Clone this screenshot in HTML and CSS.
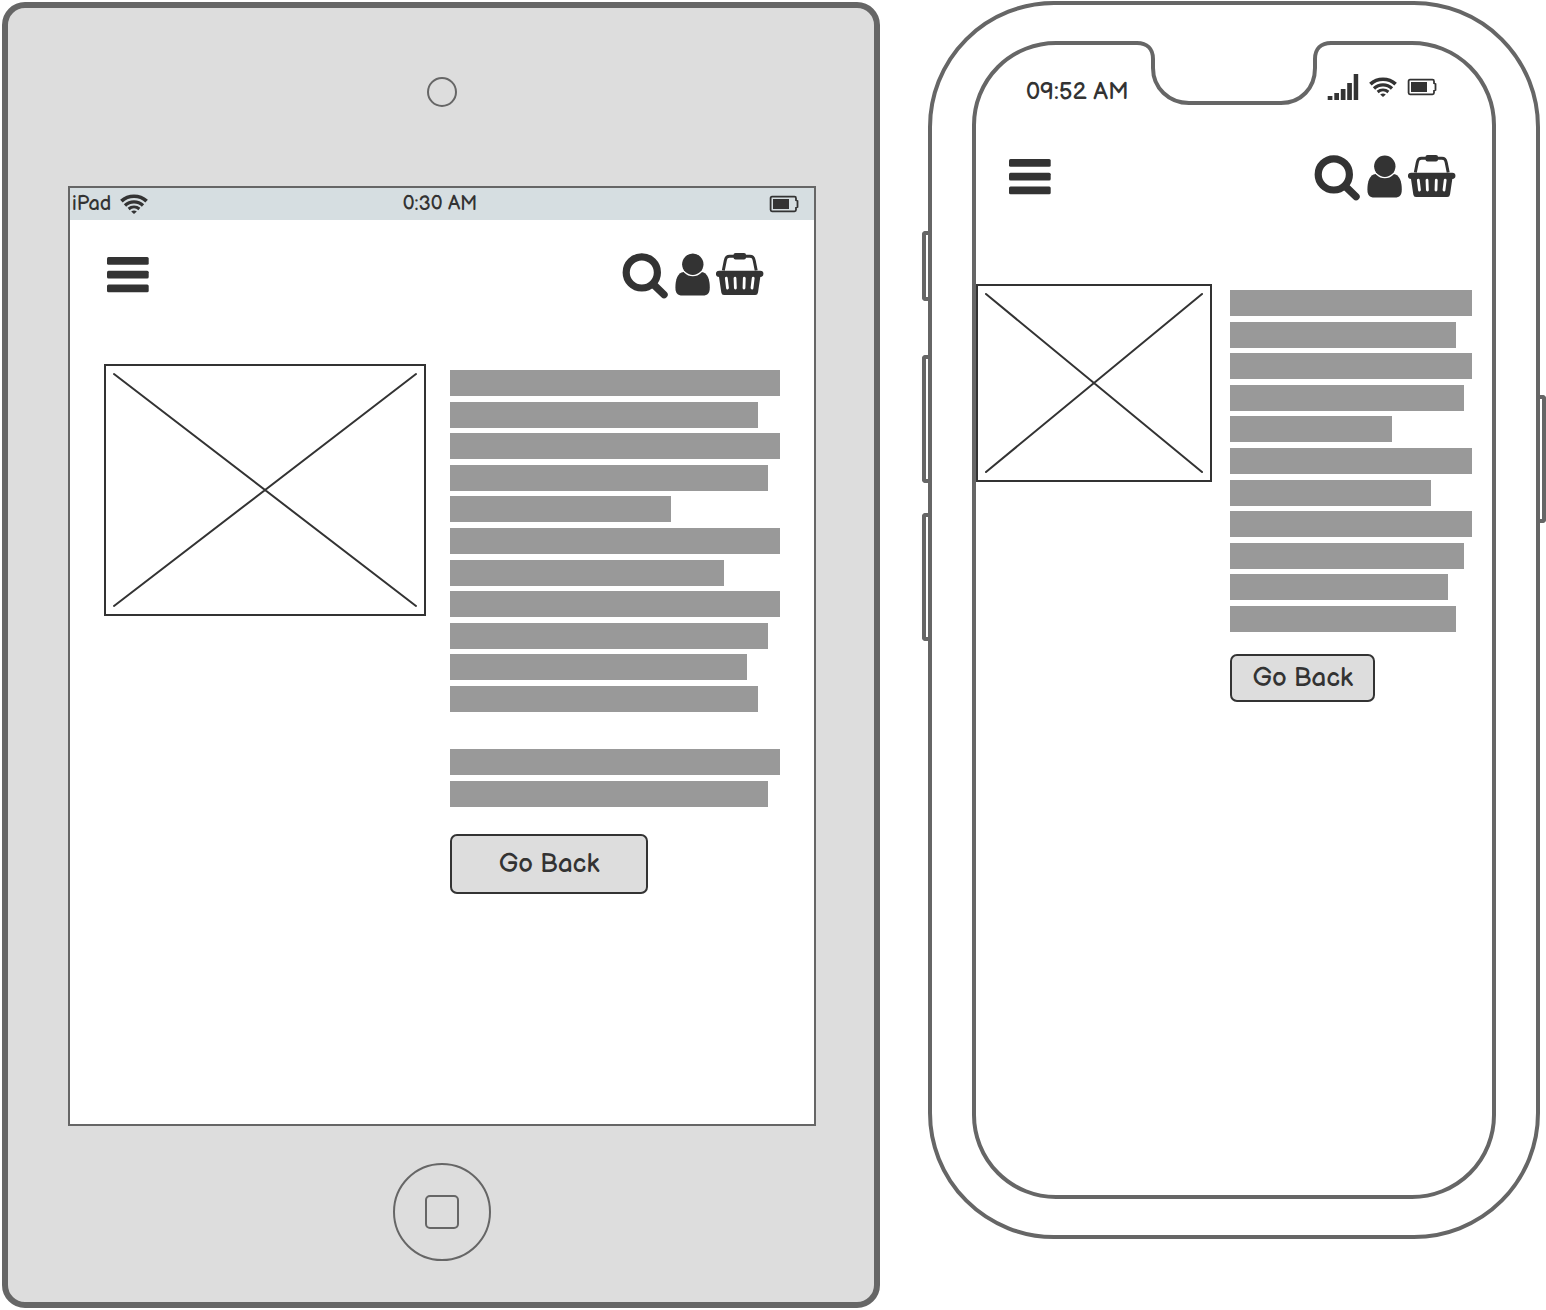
FILE: index.html
```html
<!DOCTYPE html>
<html lang="en">
<head>
<meta charset="utf-8">
<meta name="viewport" content="width=device-width, initial-scale=1">
<title>Product page wireframes</title>
<link rel="stylesheet" href="styles.css">
</head>
<body>
<svg class="sprite" aria-hidden="true">
  <symbol id="menu" viewBox="0 0 42 36">
    <rect y="0" width="41.700" height="7.700" rx="1.500"/><rect y="13.800" width="41.700" height="7.700" rx="1.500"/><rect y="27.500" width="41.700" height="7.700" rx="1.500"/>
  </symbol>
  <symbol id="search" viewBox="0 0 46 47">
    <circle cx="19.8" cy="20.400" r="15.600" fill="none" stroke="currentColor" stroke-width="7.200"/>
    <path d="M31 32 42 42.700" fill="none" stroke="currentColor" stroke-width="7.400" stroke-linecap="round"/>
  </symbol>
  <symbol id="user" viewBox="0 0 36 44">
    <path d="M9.600 20.100C3.600 20.700 1.400 27.900 1.400 35.600c0 5.500 2 8 7 8h20.400c5 0 7-2.500 7-8 0-7.700-2.200-14.900-8.200-15.500z"/>
    <circle cx="18.800" cy="12.200" r="12" fill="#fff"/>
    <circle cx="18.800" cy="12.200" r="10.700"/>
  </symbol>
  <symbol id="basket" viewBox="0 0 48 44">
    <path d="M7.300 18.500 9.300 8.500C10 5 11 4.300 13.500 4.300H34C36.500 4.300 37.500 5 38.200 8.500L40.200 18.500" fill="none" stroke="currentColor" stroke-width="3"/>
    <rect x="17.500" y="1" width="12.500" height="6.500" rx="2"/>
    <path d="M3 18.700H44.300a3 3 0 0 1 0 6.300L42 40.500Q41.600 43 39.300 43H8Q5.700 43 5.300 40.500L3 25a3 3 0 0 1 0-6.300z"/>
    <path d="M10.300 26.200 11.500 36M19 26.200 19.400 36M28.300 26.200 28 36M37.200 26.200 36 36" fill="none" stroke="#fff" stroke-width="2.800" stroke-linecap="round"/>
  </symbol>
  <symbol id="wifi" viewBox="0 0 28 20">
    <g fill="none" stroke="currentColor" stroke-width="3.700">
      <path d="M1.400 7.200A18.500 18.500 0 0 1 26.600 7.200"/>
      <path d="M5 11.500A13 13 0 0 1 23 11.500" stroke-width="3.300"/>
      <path d="M8.600 15A8.500 8.500 0 0 1 19.400 15" stroke-width="3"/>
    </g>
    <path d="M11.200 17.500Q14 15.500 16.800 17.500L14 20z"/>
  </symbol>
  <symbol id="battery" viewBox="0 0 30 18">
    <path d="M3 1.700H25.500Q27 1.700 27 3.200V5.300L28.500 6V12L27 12.700V14.800Q27 16.300 25.500 16.300H3Q1.600 16.300 1.600 14.800V3.200Q1.600 1.700 3 1.700z" fill="none" stroke="currentColor" stroke-width="1.800"/>
    <rect x="4" y="4" width="16" height="10"/>
  </symbol>
  <symbol id="signal" viewBox="0 0 32 26">
    <path d="M.7 22h4.700v4H.7zM7.300 19H12v7H7.300zM13.800 15h4.700v11h-4.700zM20.200 9h4.700v17h-4.700zM26.700 0h4.500v26h-4.500z"/>
  </symbol>
</svg>

<div class="board">
  <section class="tablet" aria-label="Tablet">
    <div class="camera"></div>
    <div class="screen tablet-screen">
      <div class="tablet-status">
        <span class="carrier">iPad <svg class="icon-wifi"><use href="#wifi"/></svg></span>
        <span>0:30 AM</span>
        <svg class="icon-battery"><use href="#battery"/></svg>
      </div>
      <header class="toolbar">
        <button class="icon-button" aria-label="Menu"><svg class="icon-menu"><use href="#menu"/></svg></button>
        <nav class="actions">
          <button class="icon-button" aria-label="Search"><svg class="icon-search"><use href="#search"/></svg></button>
          <button class="icon-button" aria-label="Account"><svg class="icon-user"><use href="#user"/></svg></button>
          <button class="icon-button" aria-label="Basket"><svg class="icon-basket"><use href="#basket"/></svg></button>
        </nav>
      </header>
      <main class="product">
        <div class="picture"><svg viewBox="0 0 100 100" preserveAspectRatio="none"><path d="M0 0 100 100M100 0 0 100"/></svg></div>
        <div class="details">
          <div class="copy copy-long">
            <i class="line"></i><i class="line w93"></i><i class="line"></i><i class="line w96"></i><i class="line w67"></i><i class="line"></i><i class="line w83"></i><i class="line"></i><i class="line w96"></i><i class="line w90"></i><i class="line w93"></i><i class="line blank"></i><i class="line"></i><i class="line w96"></i>
          </div>
          <button class="back">Go Back</button>
        </div>
      </main>
    </div>
    <div class="home"><div class="home-mark"></div></div>
  </section>

  <section class="phone" aria-label="Phone">
    <div class="rail rail-left"><i class="key key-short"></i><i class="key key-first"></i><i class="key"></i></div>
    <div class="phone-frame">
      <div class="screen phone-screen">
        <svg class="notch" viewBox="0 0 200 66">
          <path d="M2 0H198V4H181V27C181 47 167 62 147 62H55C33 62 19 47 19 27V4H2z" fill="#fff"/>
          <path d="M0 2H3C13 2 19 8 19 18V27C19 47 35 62 55 62H147C167 62 181 47 181 27V18C181 8 187 2 197 2H200" fill="none" stroke="#666" stroke-width="4"/>
        </svg>
        <div class="phone-status">
          <span class="clock">09:52 AM</span>
          <span class="indicators">
            <svg class="icon-signal"><use href="#signal"/></svg>
            <svg class="icon-wifi"><use href="#wifi"/></svg>
            <svg class="icon-battery"><use href="#battery"/></svg>
          </span>
        </div>
        <header class="toolbar">
          <button class="icon-button" aria-label="Menu"><svg class="icon-menu"><use href="#menu"/></svg></button>
          <nav class="actions">
            <button class="icon-button" aria-label="Search"><svg class="icon-search"><use href="#search"/></svg></button>
            <button class="icon-button" aria-label="Account"><svg class="icon-user"><use href="#user"/></svg></button>
            <button class="icon-button" aria-label="Basket"><svg class="icon-basket"><use href="#basket"/></svg></button>
          </nav>
        </header>
        <main class="product">
          <div class="picture"><svg viewBox="0 0 100 100" preserveAspectRatio="none"><path d="M0 0 100 100M100 0 0 100"/></svg></div>
          <div class="details">
            <div class="copy">
              <i class="line"></i><i class="line w93"></i><i class="line"></i><i class="line w96"></i><i class="line w67"></i><i class="line"></i><i class="line w83"></i><i class="line"></i><i class="line w96"></i><i class="line w90"></i><i class="line w93"></i>
            </div>
            <button class="back">Go Back</button>
          </div>
        </main>
      </div>
    </div>
    <div class="rail rail-right"><i class="key"></i></div>
  </section>
</div>
</body>
</html>
```
FILE: styles.css
```css
* { box-sizing: border-box; }

body {
  margin: 0;
  background: #fff;
  color: #333;
  font-family: "Balsamiq Sans", Lato, sans-serif;
}

svg { display: block; flex: none; fill: currentColor; }
.sprite { position: absolute; width: 0; height: 0; }

.board {
  display: grid;
  grid-template-columns: minmax(0, 878fr) minmax(0, 624fr);
  align-items: start;
  gap: 42px;
  padding: 1px 0 2px 2px;
}

.screen {
  display: flex;
  flex-direction: column;
  flex: 1;
  align-self: stretch;
  background: #fff;
}

/* Tablet */
.tablet {
  aspect-ratio: 878 / 1306;
  margin-top: 1px;
  padding: 69px 58px 41px 60px;
  display: flex;
  flex-direction: column;
  align-items: center;
  border: 6px solid #666;
  border-radius: 23px;
  background: #ddd;
}

.camera {
  width: 30px;
  height: 30px;
  margin-bottom: 79px;
  border: 2px solid #666;
  border-radius: 50%;
}

.tablet-screen { border: 2px solid #666; }

.home {
  display: grid;
  place-items: center;
  width: 98px;
  height: 98px;
  margin-top: 37px;
  border: 2px solid #666;
  border-radius: 50%;
}

.home-mark {
  width: 34px;
  height: 34px;
  border: 2px solid #666;
  border-radius: 5px;
}

.tablet-status {
  display: grid;
  grid-template-columns: 1fr auto 1fr;
  align-items: center;
  height: 32px;
  padding: 0 6px 0 2px;
  background: #d6dee1;
  font-size: 20px;
  line-height: 28px;
}

.tablet-status .icon-battery { justify-self: end; margin-right: 9px; }
.carrier { display: flex; align-items: center; gap: 9px; }

/* Phone */
.phone {
  display: flex;
  align-items: flex-start;
}

.phone-frame {
  flex: 1;
  min-width: 0;
  aspect-ratio: 612 / 1238;
  display: flex;
  padding: 36px 40px;
  border: 4px solid #666;
  border-radius: 126px;
}

.phone-screen {
  position: relative;
  border: 4px solid #666;
  border-radius: 84px;
}

.notch {
  position: absolute;
  top: -4px;
  left: 50%;
  width: 200px;
  height: 66px;
  margin-left: -100px;
}

.rail { width: 6px; }
.rail-left { padding-top: 230px; }
.rail-right { padding-top: 394px; }

.key {
  display: block;
  height: 128px;
  border: 4px solid #666;
  border-right: 0;
  border-radius: 4px 0 0 4px;
}

.rail-right .key {
  border-right: 4px solid #666;
  border-left: 0;
  border-radius: 0 4px 4px 0;
}

.key-short { height: 70px; }
.key-first { margin: 54px 0 30px; }

.phone-status {
  display: flex;
  justify-content: space-between;
  align-items: flex-start;
  padding: 29px 55px 0 50px;
  font-size: 24px;
}

.clock { line-height: 36px; }
.indicators { display: flex; align-items: center; gap: 10px; }

/* Shared page content */
.toolbar {
  display: flex;
  justify-content: space-between;
  align-items: flex-start;
  padding: 32px 50px 0 37px;
}

.phone-screen .toolbar { padding: 44px 36px 0 33px; }

.actions { display: flex; align-items: flex-start; gap: 6px; }

.icon-button {
  padding: 0;
  border: 0;
  background: none;
  color: inherit;
}

.icon-menu { width: 42px; height: 36px; margin-top: 5px; }
.icon-search { width: 46px; height: 47px; }
.icon-user { width: 36px; height: 44px; }
.icon-basket { width: 48px; height: 44px; }
.icon-wifi { width: 28px; height: 20px; }
.icon-battery { width: 30px; height: 18px; }
.icon-signal { width: 32px; height: 26px; }

.product {
  display: grid;
  grid-template-columns: 322fr 330fr;
  align-items: start;
  gap: 24px;
  padding: 65px 34px 0;
}

.phone-screen .product {
  grid-template-columns: 236fr 242fr;
  gap: 18px;
  padding: 83px 20px 0 0;
}

.picture {
  aspect-ratio: 322 / 252;
  padding: 8px;
  border: 2px solid #333;
}

.phone-screen .picture { aspect-ratio: 236 / 198; }

.picture svg { width: 100%; height: 100%; overflow: visible; }

.picture path {
  fill: none;
  stroke: #333;
  stroke-width: 2px;
  stroke-linecap: round;
  vector-effect: non-scaling-stroke;
}

.details { padding-top: 6px; }

.copy {
  display: flex;
  flex-direction: column;
  justify-content: space-between;
  height: 342px;
}

.copy-long { height: 437px; }
.line { width: 100%; height: 26px; background: #999; }
.blank { visibility: hidden; }
.w96 { width: 96.5%; }
.w93 { width: 93.4%; }
.w90 { width: 90%; }
.w83 { width: 83%; }
.w67 { width: 67%; }

.back {
  display: block;
  width: 60%;
  height: 60px;
  margin-top: 27px;
  padding: 2px 0 0;
  border: 2px solid #333;
  border-radius: 7px;
  background: #ddd;
  color: inherit;
  font: inherit;
  font-size: 26px;
  line-height: 32px;
}

.phone-screen .back { height: 48px; margin-top: 22px; }
```
